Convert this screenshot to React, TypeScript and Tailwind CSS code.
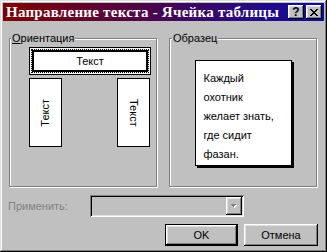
import React from 'react';

const sans = "font-['Liberation_Sans',Arial,sans-serif]";
const raised =
  'shadow-[inset_-1px_-1px_0_#000,inset_1px_1px_0_#fff,inset_-2px_-2px_0_#808080,inset_2px_2px_0_#dfdfdf]';

// Win98 close glyph, 8x7 pixels
const closeRows = ['XX....XX', '.XX..XX.', '..XXXX..', '...XX...', '..XXXX..', '.XX..XX.', 'XX....XX'];

function CloseGlyph() {
  return (
    <svg width="8" height="7" viewBox="0 0 8 7" shapeRendering="crispEdges">
      {closeRows.map((row, y) =>
        row.split('').map((c, x) => (c === 'X' ? <rect key={`${x}-${y}`} x={x} y={y} width="1" height="1" fill="#000" /> : null)),
      )}
    </svg>
  );
}

function CaptionButton({ children }: { children: React.ReactNode }) {
  return (
    <div className={`w-[16px] h-[14px] bg-[#c0c0c0] flex items-center justify-center ${raised}`}>{children}</div>
  );
}

function TitleBar() {
  return (
    <div className="h-[18px] flex items-center bg-[linear-gradient(to_right,#800000,#0c0ca8)] pl-[3px] pr-[2px]">
      <span className="flex-1 text-white font-bold text-[15px] leading-[18px] tracking-[0.25px] font-['Liberation_Serif','Times_New_Roman',serif] whitespace-nowrap">
        Направление текста - Ячейка таблицы
      </span>
      <div className="flex gap-[2px]">
        <CaptionButton>
          <span className={`text-[12px] font-bold leading-[12px] text-black ${sans}`}>?</span>
        </CaptionButton>
        <CaptionButton>
          <CloseGlyph />
        </CaptionButton>
      </div>
    </div>
  );
}

function GroupBox({ label, labelLeft, children }: { label: React.ReactNode; labelLeft: string; children: React.ReactNode }) {
  return (
    <div className="relative w-[148px] h-[149px] border border-[#808080] shadow-[inset_1px_1px_0_#fff,1px_1px_0_#fff]">
      <span className={`absolute -top-[7px] ${labelLeft} px-px bg-[#c0c0c0] text-[11px] leading-[13px] text-black`}>{label}</span>
      {children}
    </div>
  );
}

function VerticalBox({ flip }: { flip?: boolean }) {
  return (
    <div className="w-[33px] h-[69px] border border-black bg-white flex items-center justify-center">
      <span className={`text-[11px] leading-[13px] [writing-mode:vertical-rl] ${flip ? 'rotate-180' : ''}`}>Текст</span>
    </div>
  );
}

export default function App() {
  return (
    <div
      className={`w-[327px] h-[252px] bg-[#c0c0c0] p-[3px] flex flex-col ${sans} shadow-[inset_-1px_-1px_0_#000,inset_1px_1px_0_#dfdfdf,inset_-2px_-2px_0_#808080,inset_2px_2px_0_#fff]`}
    >
      <TitleBar />

      {/* group boxes */}
      <div className="flex gap-[12px] pl-[6px] mt-[17px]">
        <GroupBox
          labelLeft="left-[1px]"
          label={
            <>
              <span className="underline">О</span>риентация
            </>
          }
        >
          <div className="pl-[19px] pt-[8px] flex flex-col gap-[3px] w-[141px]">
            <div className="h-[28px] w-[122px] border border-black bg-white p-px">
              <div className="h-full border border-dotted border-black">
                <div className="h-full border-2 border-black flex items-center justify-center text-[11px] leading-[13px]">
                  Текст
                </div>
              </div>
            </div>
            <div className="flex justify-between w-[121px]">
              <VerticalBox flip />
              <VerticalBox />
            </div>
          </div>
        </GroupBox>

        <GroupBox labelLeft="left-[2px]" label="Образец">
          <div className="h-full flex items-center justify-center">
            <div className="w-[97px] h-[106px] border border-black bg-white shadow-[2px_2px_0_#000] pl-[8px] pt-[8px] text-[11px] leading-[19px] text-black">
              <div>Каждый</div>
              <div>охотник</div>
              <div>желает знать,</div>
              <div>где сидит</div>
              <div>фазан.</div>
            </div>
          </div>
        </GroupBox>
      </div>

      {/* apply-to row */}
      <div className="flex items-center mt-[8px] pl-[5px]">
        <span className="w-[82px] text-[11px] leading-[13px] text-[#808080]">Применить:</span>
        <div className="w-[154px] h-[22px] bg-[#c0c0c0] p-[2px] flex justify-end shadow-[inset_1px_1px_0_#808080,inset_-1px_-1px_0_#fff,inset_2px_2px_0_#000,inset_-2px_-2px_0_#dfdfdf]">
          <div className={`w-[16px] h-full bg-[#c0c0c0] flex items-center justify-center ${raised}`}>
            <svg width="7" height="5" viewBox="0 0 7 5" shapeRendering="crispEdges">
              <path d="M1 1h5v1h-1v1h-1v1h-1v-1h-1v-1h-1z" fill="#fff" />
              <path d="M0 0h5v1h-1v1h-1v1h-1v-1h-1v-1h-1z" fill="#808080" />
            </svg>
          </div>
        </div>
      </div>

      {/* buttons */}
      <div className="flex justify-end gap-[6px] mt-[7px] pr-[6px]">
        <div className="w-[73px] h-[22px] border border-black">
          <div className={`h-full bg-[#c0c0c0] flex items-center justify-center text-[11px] leading-[13px] text-black ${raised}`}>
            OK
          </div>
        </div>
        <div className={`w-[74px] h-[22px] bg-[#c0c0c0] flex items-center justify-center text-[11px] leading-[13px] text-black ${raised}`}>
          Отмена
        </div>
      </div>
    </div>
  );
}
